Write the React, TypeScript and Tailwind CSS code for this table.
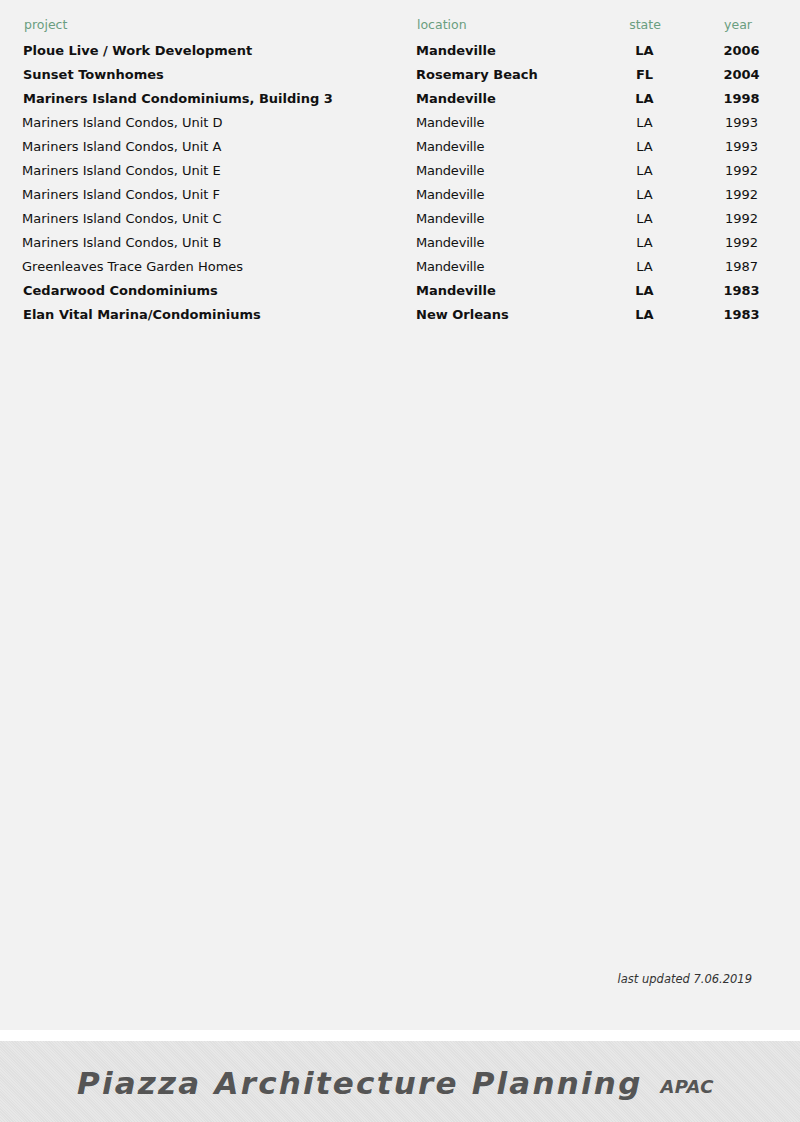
const rows: [string, string, string, string, boolean][] = [
  ["Ploue Live / Work Development", "Mandeville", "LA", "2006", true],
  ["Sunset Townhomes", "Rosemary Beach", "FL", "2004", true],
  ["Mariners Island Condominiums, Building 3", "Mandeville", "LA", "1998", true],
  ["Mariners Island Condos, Unit D", "Mandeville", "LA", "1993", false],
  ["Mariners Island Condos, Unit A", "Mandeville", "LA", "1993", false],
  ["Mariners Island Condos, Unit E", "Mandeville", "LA", "1992", false],
  ["Mariners Island Condos, Unit F", "Mandeville", "LA", "1992", false],
  ["Mariners Island Condos, Unit C", "Mandeville", "LA", "1992", false],
  ["Mariners Island Condos, Unit B", "Mandeville", "LA", "1992", false],
  ["Greenleaves Trace Garden Homes", "Mandeville", "LA", "1987", false],
  ["Cedarwood Condominiums", "Mandeville", "LA", "1983", true],
  ["Elan Vital Marina/Condominiums", "New Orleans", "LA", "1983", true],
]

export default function App() {
  return (
    <div className="w-[800px] h-[1122px] flex flex-col bg-white font-['DejaVu_Sans',sans-serif]">
      {/* Listing */}
      <div className="h-[1030px] bg-[#f2f2f2] flex flex-col pt-[15px]">
        <div className="grid grid-cols-[394px_184px_90px_94px] pl-[22px] h-[20px] items-center text-[12.5px] text-[#6a9e80]">
          <span className="pl-[2px]">project</span>
          <span className="pl-[1px]">location</span>
          <span className="text-center">state</span>
          <span className="text-center pl-[2px]">year</span>
        </div>
        <div className="flex flex-col pt-[4px]">
          {rows.map(([p, l, s, y, b]) => (
            <div
              key={p + s + y + l + p.length}
              className={`grid grid-cols-[394px_184px_90px_94px] pl-[22px] h-[24px] items-center text-[#111] text-[13px] ${
                b ? "font-bold" : ""
              }`}
            >
              <span className={b ? "pl-[1px]" : ""}>{p}</span>
              <span className={b ? "" : "tracking-[-0.2px]"}>{l}</span>
              <span className="text-center pr-[1px]">{s}</span>
              <span className="text-center pl-[9px]">{y}</span>
            </div>
          ))}
        </div>
        <div className="mt-auto mb-[42px] pr-[48px] text-right italic text-[11.5px] text-[#333]">
          last updated 7.06.2019
        </div>
      </div>
      <div className="h-[11px] bg-white" />
      {/* Footer banner */}
      <div className="flex-1 bg-[repeating-linear-gradient(45deg,#e7e7e7_0px,#e7e7e7_1px,#e0e0e0_1px,#e0e0e0_2px)] flex items-center pl-[77px] pt-[3px]">
        <span className="font-bold italic text-[31px] tracking-[2.2px] text-[#555]">
          Piazza Architecture Planning
        </span>
        <span className="ml-[18px] mt-[6px] font-bold italic text-[18px] text-[#555] tracking-[0.3px]">APAC</span>
      </div>
    </div>
  )
}
